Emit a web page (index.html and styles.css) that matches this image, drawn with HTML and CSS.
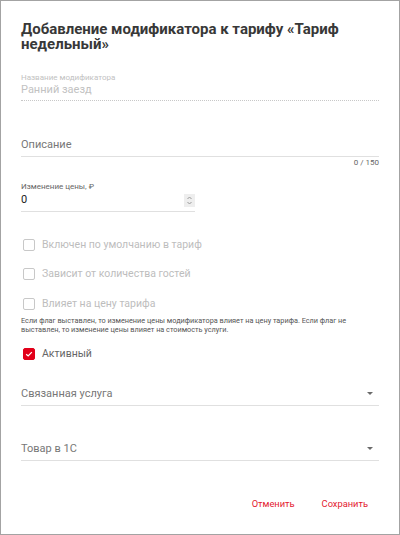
FILE: index.html
```html
<!DOCTYPE html>
<html lang="ru">
<head>
<meta charset="utf-8">
<link rel="stylesheet" href="styles.css">
</head>
<body>
<div class="dialog">
  <h1 class="title">Добавление модификатора к тарифу «Тариф недельный»</h1>

  <div class="field field-name">
    <div class="label-small muted">Название модификатора</div>
    <div class="value muted">Ранний заезд</div>
    <div class="line dotted"></div>
  </div>

  <div class="field field-desc">
    <div class="value placeholder">Описание</div>
    <div class="line"></div>
    <div class="counter">0 / 150</div>
  </div>

  <div class="field field-price">
    <div class="label-small">Изменение цены, ₽</div>
    <div class="price-row">
      <span class="value dark">0</span>
      <span class="spinner">
        <svg width="11" height="13" viewBox="0 0 11 13"><path d="M3.5 5 L5.5 3 L7.5 5 M3.5 8 L5.5 10 L7.5 8" fill="none" stroke="#999" stroke-width="1"/></svg>
      </span>
    </div>
    <div class="line"></div>
  </div>

  <div class="checks">
    <label class="check disabled"><span class="box"></span><span>Включен по умолчанию в тариф</span></label>
    <label class="check disabled"><span class="box"></span><span>Зависит от количества гостей</span></label>
    <label class="check disabled"><span class="box"></span><span>Влияет на цену тарифа</span></label>
  </div>
  <p class="hint">Если флаг выставлен, то изменение цены модификатора влияет на цену тарифа. Если флаг не выставлен, то изменение цены влияет на стоимость услуги.</p>

  <label class="check active"><span class="box checked"><svg width="12" height="12" viewBox="0 0 12 12"><path d="M2.6 6.2 L5 8.4 L9.4 3.8" fill="none" stroke="#fff" stroke-width="1.5"/></svg></span><span>Активный</span></label>

  <div class="select select-first">
    <span class="value placeholder">Связанная услуга</span>
    <span class="arrow"></span>
  </div>
  <div class="select select-second">
    <span class="value placeholder">Товар в 1С</span>
    <span class="arrow"></span>
  </div>

  <div class="actions">
    <button class="btn">Отменить</button>
    <button class="btn">Сохранить</button>
  </div>
</div>
</body>
</html>
```
FILE: styles.css
```css
* { box-sizing: border-box; }
html, body { margin: 0; padding: 0; background: #fff; }
body {
  font-family: Roboto, "Noto Sans", sans-serif;
  width: 400px;
  height: 535px;
  overflow: hidden;
}
.dialog {
  width: 400px;
  height: 535px;
  border: 1px solid #a3a3a3;
  padding: 21px 20px 0 20px;
  display: flex;
  flex-direction: column;
}
.title {
  margin: 0;
  font-size: 15px;
  font-weight: 700;
  line-height: 15px;
  color: #383838;
}
.field { display: flex; flex-direction: column; }
.label-small { font-size: 8px; line-height: 11px; height: 11px; color: #666; }
.muted { color: #c2c2c2; }
.value { font-size: 11px; line-height: 14px; height: 14px; }
.placeholder { color: #777; }
.dark { color: #222; }
.line { height: 1px; background: #e0e0e0; flex: none; }

.field-name { margin-top: 20px; }
.dotted { background: none; border-top: 1px dotted #c8c8c8; height: 0; margin-top: 3px; }

.field-desc { margin-top: 37px; }
.field-desc .line { margin-top: 4px; }
.counter { align-self: flex-end; font-size: 8px; line-height: 10px; height: 10px; color: #666; margin-top: 1px; }

.field-price { margin-top: 14px; width: 174px; }
.field-price .label-small { height: 10px; line-height: 10px; }
.price-row { display: flex; align-items: center; justify-content: space-between; margin-top: 1px; height: 14px; }
.spinner {
  width: 11px; height: 13px; background: #eeeeee;
  display: flex; align-items: center; justify-content: center;
}
.field-price .line { margin-top: 4px; }

.checks { display: flex; flex-direction: column; gap: 15.5px; margin-top: 25.5px; }
.check { display: flex; align-items: center; gap: 7px; font-size: 10.5px; line-height: 14px; height: 14px; padding-left: 2px; }
.check .box {
  width: 12px; height: 12px; border: 1.5px solid #c8c8c8; border-radius: 2px;
  display: flex; align-items: center; justify-content: center; flex: none;
}
.check.disabled { color: #bdbdbd; }
.hint { margin: 5px 0 0 0; font-size: 7.3px; line-height: 9px; color: #555; }
.check.active { margin-top: 13px; color: #666; }
.box.checked { background: #e2001a; border-color: #e2001a; }

.select {
  display: flex; align-items: center; justify-content: space-between;
  border-bottom: 1px solid #e0e0e0; padding: 0 6px 4px 0; flex: none;
}
.select .value { font-size: 11px; }
.select-first { margin-top: 26px; }
.select-second { margin-top: 36px; }
.arrow {
  width: 0; height: 0;
  border-left: 3.5px solid transparent; border-right: 3.5px solid transparent;
  border-top: 3.5px solid #6a6a6a;
}
.actions { display: flex; justify-content: flex-end; gap: 11px; margin-top: 33px; padding-right: 3px; }
.btn {
  background: none; border: none; padding: 0 8px; height: 20px; line-height: 20px;
  font-family: Roboto, sans-serif; font-size: 9.3px; color: #e3192f; cursor: pointer;
}
```
